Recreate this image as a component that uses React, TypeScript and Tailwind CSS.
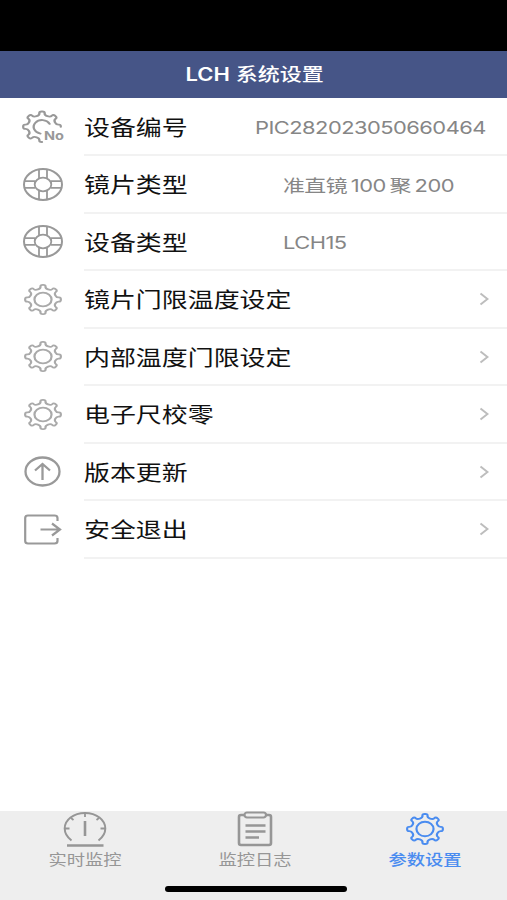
import type { ReactNode } from "react";

interface SettingRow {
  id: number;
  label: string;
  icon: ReactNode;
  labelClass?: string;
  value?: ReactNode;
}

interface Tab {
  id: number;
  label: string;
  icon: ReactNode;
  active?: boolean;
}

// eight rounded teeth joined by scooped valleys
function gearOutline(from: number, to: number) {
  const point = (r: number, deg: number) => {
    const a = (deg * Math.PI) / 180;
    return `${(50 + r * Math.sin(a)).toFixed(2)} ${(50 - r * Math.cos(a)).toFixed(2)}`;
  };
  let d = `M${point(47, from * 45)}`;
  for (let i = from; i < to; i++) {
    const a = i * 45;
    d += ` C${point(47.5, a + 7)} ${point(45, a + 9)} ${point(42, a + 9)}`;
    d += ` C${point(34, a + 10)} ${point(34, a + 35)} ${point(42, a + 36)}`;
    d += ` C${point(45, a + 36)} ${point(47.5, a + 38)} ${point(47, a + 45)}`;
  }
  return d;
}

function GearIcon({ className }: { className: string }) {
  return (
    <svg
      className={className}
      viewBox="0 0 100 100"
      preserveAspectRatio="none"
      fill="none"
      stroke="currentColor"
      strokeWidth="5.8"
      strokeLinejoin="round"
    >
      <path d={gearOutline(0, 8) + "Z"} />
      <circle cx="50" cy="50" r="22.5" />
    </svg>
  );
}

function NumberGearIcon() {
  return (
    <svg className="w-[44px] h-[36px]" viewBox="0 0 44 36" fill="none" stroke="currentColor">
      <g transform="translate(1 1.5) scale(0.4 0.325)" strokeWidth="5.8" strokeLinecap="round">
        <path d={gearOutline(-4, 2)} />
        <path d="M46 71A21 21 0 1 1 69 41" />
      </g>
      <text
        x="23"
        y="31"
        textLength="20"
        lengthAdjust="spacingAndGlyphs"
        fill="currentColor"
        stroke="none"
        className="font-bold text-[12px]"
      >
        No
      </text>
    </svg>
  );
}

function LensIcon() {
  return (
    <svg className="w-[42px] h-[34px]" viewBox="0 0 42 34" fill="none" stroke="currentColor" strokeWidth="1.8">
      <ellipse cx="21" cy="16.5" rx="19" ry="15.4" strokeWidth="2" />
      <ellipse cx="21" cy="16.5" rx="8.3" ry="6.8" />
      <path d="M17 1.5V10.5M25 1.5V10.5M17 22.5V31.5M25 22.5V31.5M2.5 13.2H13.5M2.5 19.8H13.5M28.5 13.2H39.5M28.5 19.8H39.5" />
    </svg>
  );
}

function UpdateIcon() {
  return (
    <svg className="w-[38px] h-[32px]" viewBox="0 0 38 32" fill="none" stroke="currentColor" strokeWidth="2.3">
      <ellipse cx="18.5" cy="15.5" rx="17" ry="14" />
      <path d="M18.5 24V8.500M11 14.500L18.500 8L26 14.500" />
    </svg>
  );
}

function ExitIcon() {
  return (
    <svg className="w-[38px] h-[32px]" viewBox="0 0 38 32" fill="none" stroke="currentColor" strokeWidth="2.2">
      <path d="M33.5 7V4Q33.5 1.5 30.5 1.5H4Q1.200 1.5 1.200 4V27Q1.200 29.5 4 29.5H30.500Q33.500 29.5 33.500 27V24" />
      <path d="M16.500 15.500H36M28 9.500L36 15.500L28 21.500" />
    </svg>
  );
}

function GaugeIcon() {
  return (
    <svg className="w-[44px] h-[36px]" viewBox="0 0 44 36" fill="none" stroke="currentColor" strokeWidth="2">
      <path d="M8.500 29.500C4 26 1.700 22 1.700 17.500C1.700 9 10.500 2 22 2C33.500 2 42.300 9 42.300 17.500C42.300 22 40 26 35.500 29.500" />
      <path d="M22 2V6M2 17.500H6.500M42 17.500H37.500M8 7L10.500 9M36 7L33.500 9" strokeWidth="1.8" />
      <path d="M22 10V25" strokeWidth="2.6" />
      <path d="M4 34.500H40.500" strokeWidth="2.4" />
    </svg>
  );
}

function LogIcon() {
  return (
    <svg className="w-[36px] h-[36px]" viewBox="0 0 36 36" fill="none" stroke="currentColor" strokeWidth="2.6">
      <path d="M8 4H4Q2 4 2 6V32Q2 34 4 34H32Q34 34 34 32V6Q34 4 32 4H28" />
      <rect x="7.5" y="1.5" width="21.5" height="5" rx="2.5" strokeWidth="2.2" />
      <path d="M8.500 14.500H28.500M8.500 20.500H28.500M8.500 26.500H22" strokeWidth="2.3" />
    </svg>
  );
}

function ChevronIcon() {
  return (
    <svg className="w-[10px] h-[14px] text-[#bdbdbd]" viewBox="0 0 10 14" fill="none" stroke="currentColor" strokeWidth="2">
      <path d="M1.5 1.5L8.5 7L1.5 12.5" />
    </svg>
  );
}

const thinGear = <GearIcon className="w-[38px] h-[31px] -mt-px text-[#aaaaaa]" />;

const rows: SettingRow[] = [
  {
    id: 1,
    label: "设备编号",
    icon: <NumberGearIcon />,
    labelClass: "w-[171px]",
    value: "PIC282023050660464",
  },
  {
    id: 2,
    label: "镜片类型",
    icon: <LensIcon />,
    labelClass: "w-[199px]",
    value: (
      <>
        准直镜<span className="mx-[3px]">100</span>聚<span className="ml-[3px]">200</span>
      </>
    ),
  },
  {
    id: 3,
    label: "设备类型",
    icon: <LensIcon />,
    labelClass: "w-[199px]",
    value: "LCH15",
  },
  { id: 4, label: "镜片门限温度设定", icon: thinGear },
  { id: 5, label: "内部温度门限设定", icon: thinGear },
  { id: 6, label: "电子尺校零", icon: thinGear },
  { id: 7, label: "版本更新", icon: <UpdateIcon /> },
  { id: 8, label: "安全退出", icon: <ExitIcon /> },
];

const tabs: Tab[] = [
  { id: 1, label: "实时监控", icon: <GaugeIcon /> },
  { id: 2, label: "监控日志", icon: <LogIcon /> },
  {
    id: 3,
    label: "参数设置",
    icon: <GearIcon className="w-[38px] h-[32px]" />,
    active: true,
  },
];

function Row({ row }: { row: SettingRow }) {
  return (
    <div className="flex flex-row items-center h-[57.5px]">
      <div className="flex w-[84px] pl-px justify-center text-[#999999] shrink-0">
        {row.icon}
      </div>
      <div className="flex flex-1 h-full items-center border-b-2 border-[#f2f2f2]">
        <div className={`pt-[3px] ${row.labelClass ?? "flex-1"}`}>
          <span className="inline-block origin-left scale-x-[1.235] text-[21px] leading-7 text-[#111111] whitespace-nowrap">
            {row.label}
          </span>
        </div>
        {row.value ? (
          <div className="pt-[4px]">
            <span className="inline-block origin-left scale-x-[1.25] text-[17.5px] leading-7 tracking-[-0.42px] text-[#868686] whitespace-nowrap">
              {row.value}
            </span>
          </div>
        ) : (
          <div className="pr-[18px] pt-px">
            <ChevronIcon />
          </div>
        )}
      </div>
    </div>
  );
}

export default function App() {
  return (
    <div className="flex flex-col w-[507px] h-[900px] bg-white overflow-hidden font-['Inter','Noto_Sans_CJK_SC',sans-serif]">
      <div className="h-[51px] bg-black shrink-0" />
      <header className="flex h-[46.5px] pl-[3px] pt-px shrink-0 items-center justify-center bg-[#465587]">
        <h1 className="scale-x-[1.22] text-[18px] font-medium text-white whitespace-nowrap">
          <span className="font-semibold">LCH</span> 系统设置
        </h1>
      </header>
      <main className="flex-1 pt-px">
        {rows.map((row) => (
          <Row key={row.id} row={row} />
        ))}
      </main>
      <nav className="flex flex-col h-[89px] shrink-0 bg-[#eeeeee]">
        <div className="flex flex-row flex-1">
          {tabs.map((tab) => (
            <div
              key={tab.id}
              className={`flex w-[170px] shrink-0 flex-col items-center ${tab.active ? "text-[#4a8cf0]" : "text-[#969696]"}`}
            >
              <div className="flex h-[36px] items-center">{tab.icon}</div>
              <span
                className={`scale-x-[1.22] pt-[2px] text-[15px] leading-[22px] whitespace-nowrap ${tab.active ? "font-medium" : ""}`}
              >
                {tab.label}
              </span>
            </div>
          ))}
        </div>
        <div className="mb-2 ml-[4px] h-[6px] w-[182px] self-center rounded-full bg-black" />
      </nav>
    </div>
  );
}
